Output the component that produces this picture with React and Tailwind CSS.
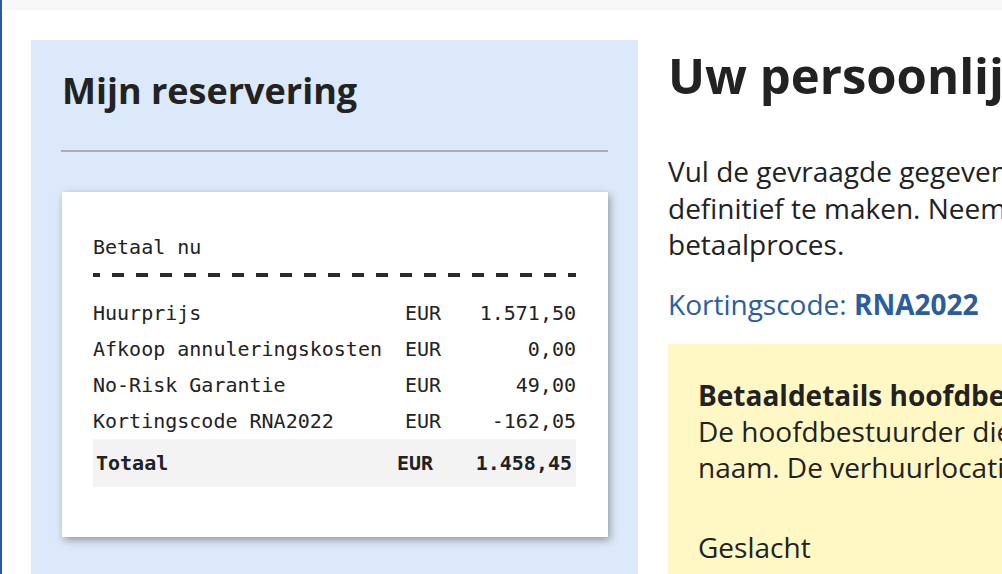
import React from 'react';

const rows = [
  { label: 'Huurprijs', amount: '1.571,50' },
  { label: 'Afkoop annuleringskosten', amount: '0,00' },
  { label: 'No-Risk Garantie', amount: '49,00' },
  { label: 'Kortingscode RNA2022', amount: '-162,05' },
];

function Receipt() {
  return (
    <div className="bg-white pt-[41px] pb-[50px] pl-[31px] pr-[32px] shadow-[2px_3px_8px_rgba(0,0,0,0.35)] font-['DejaVu_Sans_Mono',monospace] text-[20px] text-[#222]">
      <div className="leading-[28px]">Betaal nu</div>
      <div className="mt-[12px] h-[4px] bg-[repeating-linear-gradient(90deg,#2a2a2a_0_7px,transparent_7px_19px,#2a2a2a_19px_24px)]" />
      <div className="mt-[18px]">
        {rows.map((row) => (
          <div key={row.label} className="flex h-[36px] items-center">
            <span className="flex-1">{row.label}</span>
            <span className="w-[36px]">EUR</span>
            <span className="w-[135px] text-right">{row.amount}</span>
          </div>
        ))}
        <div className="flex h-[48px] items-center bg-[#f3f3f3] pl-[3px] pr-[4px] font-bold">
          <span className="flex-1">Totaal</span>
          <span className="w-[36px]">EUR</span>
          <span className="w-[139px] text-right">1.458,45</span>
        </div>
      </div>
    </div>
  );
}

export default function App() {
  return (
    <div className="w-[1002px] h-[574px] overflow-hidden bg-white border-l-2 border-[#2d5b99] font-['Open_Sans',sans-serif] text-[#222]">
      <div className="h-[10px] bg-[#f8f8f8]" />
      <div className="flex gap-[30px] pt-[30px] pl-[29px]">
        <aside className="w-[607px] shrink-0 bg-[#dbe9fa] px-[30px] pt-[29px] pb-[60px]">
          <h2 className="pl-px text-[36px] font-bold leading-[44px] text-[#222]">Mijn reservering</h2>
          <div className="mt-[37px] h-[2px] bg-[#a9aeae]" />
          <div className="mt-[40px] ml-px">
            <Receipt />
          </div>
        </aside>

        <main className="w-[760px] shrink-0 pt-[6px]">
          <h1 className="whitespace-nowrap text-[49px] font-bold leading-[58px] text-[#222]">
            Uw persoonlijke gegevens
          </h1>
          <p className="mt-[49px] whitespace-nowrap text-[28px] leading-[36.5px] text-[#222]">
            Vul de gevraagde gegevens in om uw reservering
            <br />
            definitief te maken. Neem uw betaalgegevens bij de hand voor het
            <br />
            betaalproces.
          </p>
          <p className="mt-[23px] whitespace-nowrap text-[28px] leading-[36px] text-[#2a5d9f]">
            Kortingscode: <span className="font-bold">RNA2022</span>
          </p>
          <div className="mt-[22px] bg-[#fff8c5] px-[30px] pt-[33px] pb-[40px] text-[28px] leading-[36px]">
            <div className="whitespace-nowrap font-bold">Betaaldetails hoofdbestuurder</div>
            <div className="whitespace-nowrap">
              De hoofdbestuurder dient de betaling te voldoen op eigen
              <br />
              naam. De verhuurlocatie vraagt om een geldige creditcard.
            </div>
            <div className="mt-[44px]">Geslacht</div>
          </div>
        </main>
      </div>
    </div>
  );
}
